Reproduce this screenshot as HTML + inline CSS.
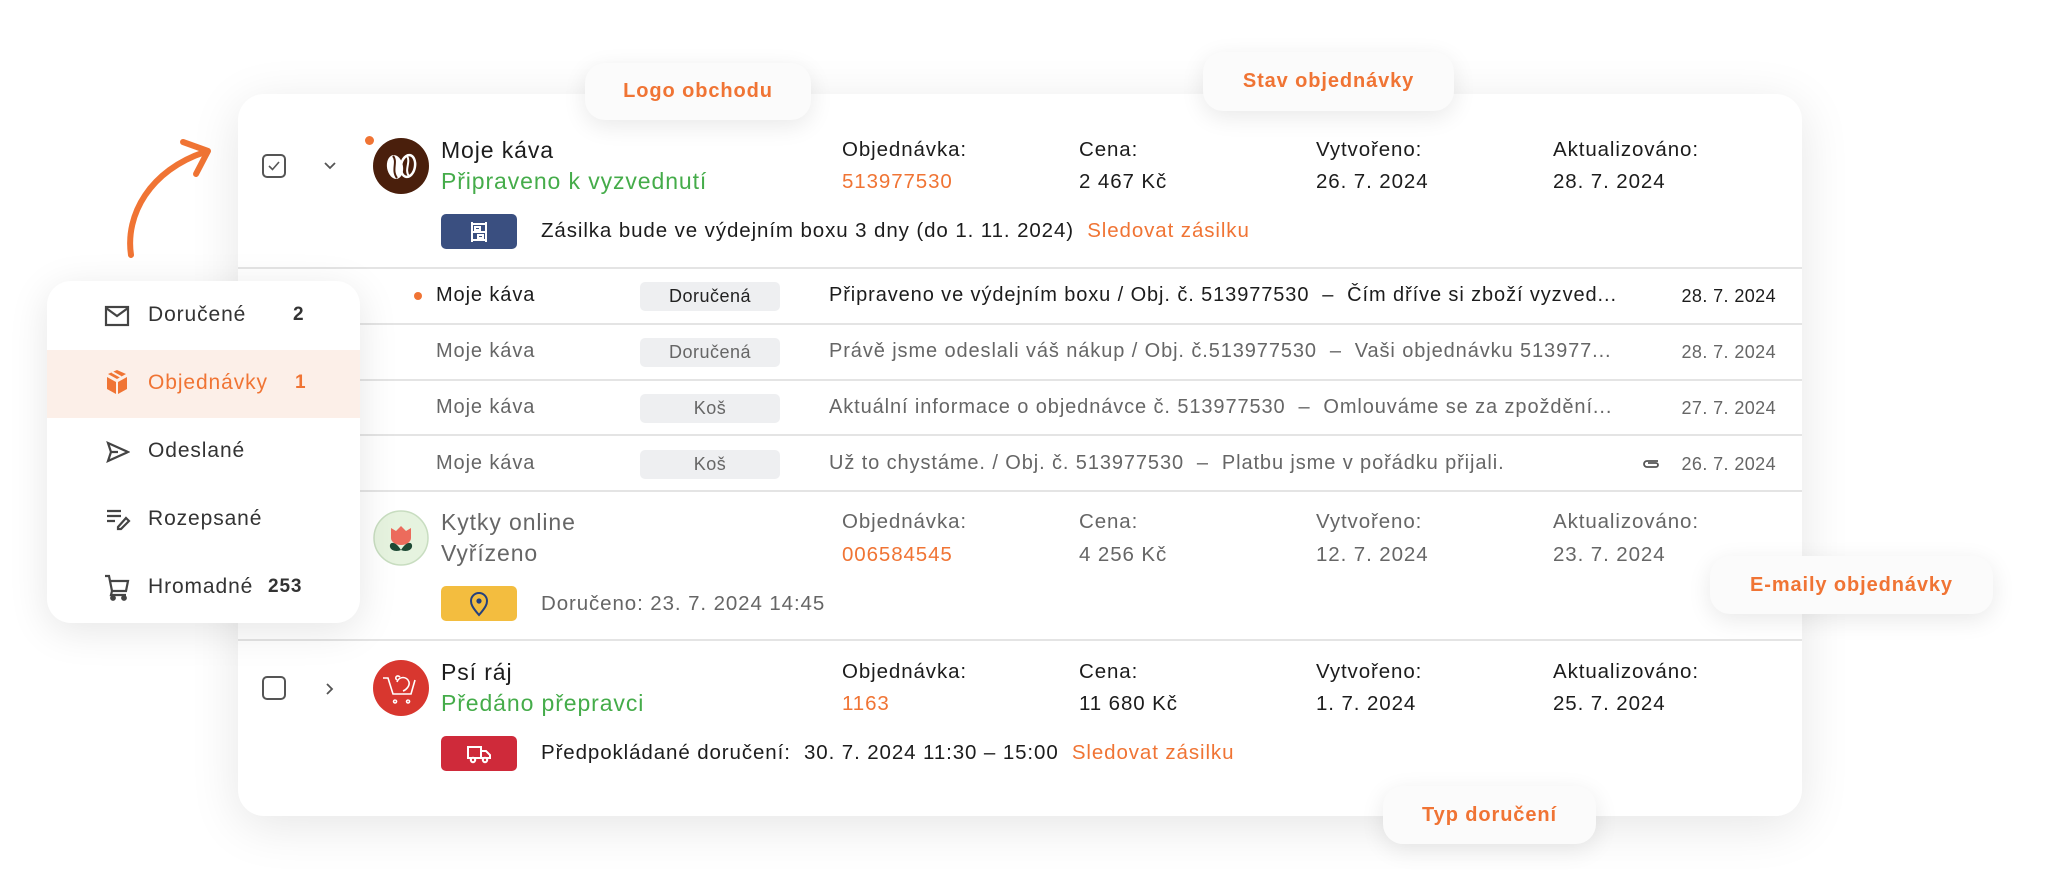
<!DOCTYPE html>
<html><head><meta charset="utf-8"><style>
*{margin:0;padding:0;box-sizing:border-box}
body{width:2048px;height:888px;background:#fff;font-family:"Liberation Sans",sans-serif;position:relative;overflow:hidden;color:#1c1c1c;letter-spacing:0.9px}
.a{position:absolute;white-space:nowrap}
.card{position:absolute;left:238px;top:94px;width:1564px;height:722px;background:#fff;border-radius:26px;box-shadow:0 10px 50px rgba(0,0,0,.10)}
.side{position:absolute;left:47px;top:281px;width:313px;height:342px;background:#fff;border-radius:24px;box-shadow:0 8px 40px rgba(0,0,0,.10);z-index:5}
.pill{position:absolute;background:#fbfbfb;border-radius:20px;box-shadow:0 6px 24px rgba(0,0,0,.09);color:#f07434;font-weight:bold;font-size:20px;display:flex;align-items:center;justify-content:center;z-index:6}
.hr{position:absolute;left:238px;width:1564px;height:2px;background:#e4e4e4}
.t22{font-size:22px}
.t20{font-size:20.5px}
.tag{position:absolute;width:140px;height:29px;background:#eeeff1;border-radius:5px;font-size:18px;display:flex;align-items:center;justify-content:center;color:#333;letter-spacing:0.5px}
.g{color:#666}
.or{color:#f07434}
.gr{color:#45ac4a}
.badge{position:absolute;left:441px;width:76px;height:35px;border-radius:5px;display:flex;align-items:center;justify-content:center}
.si{position:absolute;left:101px;font-size:21px;color:#333}
.d{font-size:18px;width:120px;text-align:right;left:1656px;letter-spacing:0.4px}
</style></head><body>

<svg class="a" style="left:100px;top:130px" width="130" height="140" viewBox="0 0 130 140"><path d="M31 125 C25 85 50 40 105 22" fill="none" stroke="#f07434" stroke-width="6" stroke-linecap="round"/><path d="M83 12 L108 21 L96 44" fill="none" stroke="#f07434" stroke-width="6" stroke-linecap="round" stroke-linejoin="round"/></svg>

<div class="card"></div>

<div class="pill" style="left:585px;top:63px;width:226px;height:57px">Logo obchodu</div>
<div class="pill" style="left:1203px;top:52px;width:251px;height:59px">Stav objednávky</div>
<div class="pill" style="left:1710px;top:556px;width:283px;height:58px">E-maily objednávky</div>
<div class="pill" style="left:1383px;top:786px;width:213px;height:58px">Typ doručení</div>

<!-- order 1 -->
<div class="a" style="left:262px;top:154px;width:24px;height:24px;border:2px solid #555;border-radius:5px"></div>
<svg class="a" style="left:267px;top:159px" width="14" height="14" viewBox="0 0 14 14"><path d="M2 7 L5.5 10.5 L12 3" fill="none" stroke="#555" stroke-width="1.6"/></svg>
<svg class="a" style="left:322px;top:160px" width="16" height="12" viewBox="0 0 16 12"><path d="M3 3 L8 8 L13 3" fill="none" stroke="#555" stroke-width="1.8"/></svg>
<div class="a" style="left:365px;top:136px;width:9px;height:9px;border-radius:50%;background:#f07434"></div>
<svg class="a" style="left:373px;top:138px" width="56" height="56" viewBox="0 0 56 56"><circle cx="28" cy="28" r="28" fill="#4a1f0c"/><ellipse cx="22" cy="29" rx="8" ry="12" fill="#fff" transform="rotate(-10 22 29)"/><path d="M20 18 C25 24 18 32 24 40" stroke="#4a1f0c" stroke-width="2" fill="none"/><ellipse cx="35" cy="28" rx="7" ry="11" fill="none" stroke="#fff" stroke-width="2.5" transform="rotate(10 35 28)"/><path d="M34 18 C38 24 31 32 36 38" stroke="#fff" stroke-width="2" fill="none"/></svg>
<div class="a t22" style="left:441px;top:137px;font-size:23px">Moje káva</div>
<div class="a t22 gr" style="left:441px;top:168px;font-size:23px">Připraveno k vyzvednutí</div>
<div class="a t20" style="left:842px;top:138px">Objednávka:</div>
<div class="a t20 or" style="left:842px;top:170px">513977530</div>
<div class="a t20" style="left:1079px;top:138px">Cena:</div>
<div class="a t20" style="left:1079px;top:170px">2 467 Kč</div>
<div class="a t20" style="left:1316px;top:138px">Vytvořeno:</div>
<div class="a t20" style="left:1316px;top:170px">26. 7. 2024</div>
<div class="a t20" style="left:1553px;top:138px">Aktualizováno:</div>
<div class="a t20" style="left:1553px;top:170px">28. 7. 2024</div>
<div class="badge" style="top:214px;background:#3a4f80"><svg width="24" height="24" viewBox="0 0 24 24" fill="none" stroke="#fff" stroke-width="2"><path d="M5 2V22M19 2V22M5 4H19M5 12H19M5 20H19M8 7H13V10H8zM11 15H16V18H11z"/></svg></div>
<div class="a t20" style="left:541px;top:219px">Zásilka bude ve výdejním boxu 3 dny (do 1. 11. 2024) <span class="or">&nbsp;Sledovat zásilku</span></div>

<div class="hr" style="top:267px"></div>

<!-- emails -->
<div class="a" style="left:414px;top:292px;width:8px;height:8px;border-radius:50%;background:#f07434"></div>
<div class="a" style="left:436px;top:284px;font-size:20px">Moje káva</div>
<div class="tag" style="left:640px;top:282px;color:#222">Doručená</div>
<div class="a" style="left:829px;top:284px;font-size:20px">Připraveno ve výdejním boxu / Obj. č. 513977530 &nbsp;–&nbsp; Čím dříve si zboží vyzved...</div>
<div class="a d" style="top:286px">28. 7. 2024</div>
<div class="hr" style="top:323px"></div>

<div class="a g" style="left:436px;top:340px;font-size:20px">Moje káva</div>
<div class="tag g" style="left:640px;top:338px">Doručená</div>
<div class="a g" style="left:829px;top:340px;font-size:20px">Právě jsme odeslali váš nákup / Obj. č.513977530 &nbsp;–&nbsp; Vaši objednávku 513977...</div>
<div class="a g d" style="top:342px">28. 7. 2024</div>
<div class="hr" style="top:379px"></div>

<div class="a g" style="left:436px;top:396px;font-size:20px">Moje káva</div>
<div class="tag g" style="left:640px;top:394px">Koš</div>
<div class="a g" style="left:829px;top:396px;font-size:20px">Aktuální informace o objednávce č. 513977530 &nbsp;–&nbsp; Omlouváme se za zpoždění...</div>
<div class="a g d" style="top:398px">27. 7. 2024</div>
<div class="hr" style="top:434px"></div>

<div class="a g" style="left:436px;top:452px;font-size:20px">Moje káva</div>
<div class="tag g" style="left:640px;top:450px">Koš</div>
<div class="a g" style="left:829px;top:452px;font-size:20px">Už to chystáme. / Obj. č. 513977530 &nbsp;–&nbsp; Platbu jsme v pořádku přijali.</div>
<svg class="a" style="left:1642px;top:457px" width="18" height="14" viewBox="0 0 18 14"><path d="M16 4 H5 a3 3 0 0 0 0 6 H14 a2 2 0 0 0 0-4 H6" fill="none" stroke="#555" stroke-width="1.8"/></svg>
<div class="a g d" style="top:454px">26. 7. 2024</div>
<div class="hr" style="top:490px"></div>

<!-- order 2 -->
<svg class="a" style="left:373px;top:510px" width="56" height="56" viewBox="0 0 56 56"><circle cx="28" cy="28" r="27" fill="#e6f3df" stroke="#c8ddc0" stroke-width="1.5"/><path d="M18 18 L23 21 L28 16 L33 21 L38 18 V28 a10 7 0 0 1 -20 0 Z" fill="#ec6b5c"/><path d="M28 40 C22 30 16 32 17 37 C18 41 24 42 28 40 Z M28 40 C34 30 40 32 39 37 C38 41 32 42 28 40 Z" fill="#1f4a35"/></svg>
<div class="a g" style="left:441px;top:509px;font-size:23px">Kytky online</div>
<div class="a g" style="left:441px;top:540px;font-size:23px">Vyřízeno</div>
<div class="a t20 g" style="left:842px;top:510px">Objednávka:</div>
<div class="a t20 or" style="left:842px;top:543px">006584545</div>
<div class="a t20 g" style="left:1079px;top:510px">Cena:</div>
<div class="a t20 g" style="left:1079px;top:543px">4 256 Kč</div>
<div class="a t20 g" style="left:1316px;top:510px">Vytvořeno:</div>
<div class="a t20 g" style="left:1316px;top:543px">12. 7. 2024</div>
<div class="a t20 g" style="left:1553px;top:510px">Aktualizováno:</div>
<div class="a t20 g" style="left:1553px;top:543px">23. 7. 2024</div>
<div class="badge" style="top:586px;background:#f3bd3f"><svg width="22" height="26" viewBox="0 0 22 26" fill="none" stroke="#24407e" stroke-width="2"><path d="M11 24 C4 16 3 13 3 10 a8 8 0 0 1 16 0 c0 3 -1 6 -8 14Z"/><circle cx="11" cy="10" r="1.6" fill="#24407e"/></svg></div>
<div class="a t20 g" style="left:541px;top:592px">Doručeno: 23. 7. 2024 14:45</div>

<div class="hr" style="top:639px"></div>

<!-- order 3 -->
<div class="a" style="left:262px;top:676px;width:24px;height:24px;border:2px solid #555;border-radius:5px"></div>
<svg class="a" style="left:324px;top:681px" width="12" height="16" viewBox="0 0 12 16"><path d="M3 3 L8 8 L3 13" fill="none" stroke="#555" stroke-width="1.8"/></svg>
<svg class="a" style="left:373px;top:660px" width="56" height="56" viewBox="0 0 56 56"><circle cx="28" cy="28" r="28" fill="#d8372f"/><path d="M10 18 H15 L20 34 H38 L42 20 M22 40 a1.5 1.5 0 1 0 0.1 0 M35 40 a1.5 1.5 0 1 0 0.1 0 M24 22 c2-6 10-6 12 0 c1 4-3 8-6 9 M27 17 c-3-3 -6 1 -3 3" fill="none" stroke="#fff" stroke-width="1.6"/></svg>
<div class="a" style="left:441px;top:659px;font-size:23px">Psí ráj</div>
<div class="a gr" style="left:441px;top:690px;font-size:23px">Předáno přepravci</div>
<div class="a t20" style="left:842px;top:660px">Objednávka:</div>
<div class="a t20 or" style="left:842px;top:692px">1163</div>
<div class="a t20" style="left:1079px;top:660px">Cena:</div>
<div class="a t20" style="left:1079px;top:692px">11 680 Kč</div>
<div class="a t20" style="left:1316px;top:660px">Vytvořeno:</div>
<div class="a t20" style="left:1316px;top:692px">1. 7. 2024</div>
<div class="a t20" style="left:1553px;top:660px">Aktualizováno:</div>
<div class="a t20" style="left:1553px;top:692px">25. 7. 2024</div>
<div class="badge" style="top:736px;background:#cf2a3a"><svg width="26" height="20" viewBox="0 0 26 20" fill="none" stroke="#fff" stroke-width="2"><path d="M2 3 H15 V14 H2 Z M15 7 H20 L24 11 V14 H15"/><circle cx="7" cy="16" r="2.2" fill="#cf2a3a"/><circle cx="19" cy="16" r="2.2" fill="#cf2a3a"/></svg></div>
<div class="a t20" style="left:541px;top:741px">Předpokládané doručení: &nbsp;30. 7. 2024 11:30 – 15:00 <span class="or">&nbsp;Sledovat zásilku</span></div>

<!-- sidebar -->
<div class="side">
 <div style="position:absolute;left:0;top:69px;width:313px;height:68px;background:#fcefe8"></div>
 <svg class="a" style="left:57px;top:24px" width="26" height="22" viewBox="0 0 26 22" fill="none" stroke="#444" stroke-width="2.2"><rect x="2" y="2" width="22" height="18"/><path d="M2 3 L13 11 L24 3"/></svg>
 <div class="si" style="top:22px">Doručené</div>
 <div class="a" style="left:246px;top:23px;font-size:19px;font-weight:bold;color:#333">2</div>
 <svg class="a" style="left:58px;top:88px" width="24" height="26" viewBox="0 0 24 26"><path d="M2 8 L11 13 V25 L2 20Z" fill="#f07434"/><path d="M13 13 L22 8 V20 L13 25Z" fill="#f07434"/><path d="M3 5 L12 1 L21 5 L12 10Z" fill="#f07434"/><path d="M7 3 L16 8" stroke="#fcefe8" stroke-width="2"/></svg>
 <div class="si" style="top:90px;color:#f07434">Objednávky</div>
 <div class="a" style="left:248px;top:91px;font-size:19px;font-weight:bold;color:#f07434">1</div>
 <svg class="a" style="left:59px;top:160px" width="24" height="22" viewBox="0 0 24 22" fill="none" stroke="#444" stroke-width="2.2"><path d="M2 2 L22 11 L2 20 L5 11Z M5 11 H12"/></svg>
 <div class="si" style="top:158px">Odeslané</div>
 <svg class="a" style="left:58px;top:226px" width="26" height="24" viewBox="0 0 26 24" fill="none" stroke="#444" stroke-width="2.2"><path d="M2 4 H16 M2 9 H16 M2 14 H10 M13 20 L21 11 L24 14 L16 22 H13Z"/></svg>
 <div class="si" style="top:226px">Rozepsané</div>
 <svg class="a" style="left:56px;top:292px" width="28" height="28" viewBox="0 0 28 28" fill="none" stroke="#444" stroke-width="2.2"><path d="M2 3 H6 L9 18 H23 L25 8 H8 M9 18 L8 22 H23"/><circle cx="10" cy="25" r="1.8" fill="#444"/><circle cx="21" cy="25" r="1.8" fill="#444"/></svg>
 <div class="si" style="top:294px">Hromadné</div>
 <div class="a" style="left:221px;top:295px;font-size:19px;font-weight:bold;color:#333">253</div>
</div>

</body></html>
